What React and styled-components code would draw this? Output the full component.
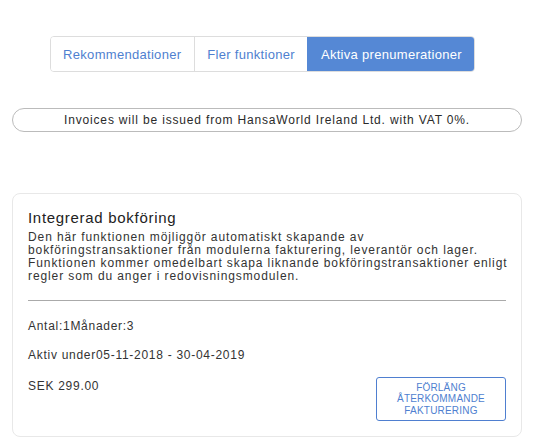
import styled, { createGlobalStyle } from "styled-components";

const GlobalStyle = createGlobalStyle`
  body {
    margin: 0;
    background: #ffffff;
    font-family: "Liberation Sans", Arial, sans-serif;
    color: #333333;
  }
`;

const tabs = ["Rekommendationer", "Fler funktioner", "Aktiva prenumerationer"];

export default function App() {
  return (
    <Page>
      <GlobalStyle />
      <TabRow>
        <TabGroup>
          {tabs.map((t, i) => (
            <Tab key={t} $active={i === 2}>
              {t}
            </Tab>
          ))}
        </TabGroup>
      </TabRow>
      <Notice>Invoices will be issued from HansaWorld Ireland Ltd. with VAT 0%.</Notice>
      <Card>
        <Title>Integrerad bokföring</Title>
        <Description>
          Den här funktionen möjliggör automatiskt skapande av
          <br />
          bokföringstransaktioner från modulerna fakturering, leverantör och lager.
          <br />
          Funktionen kommer omedelbart skapa liknande bokföringstransaktioner enligt
          <br />
          regler som du anger i redovisningsmodulen.
        </Description>
        <Divider />
        <Info>Antal:1Månader:3</Info>
        <Info>Aktiv under05-11-2018 - 30-04-2019</Info>
        <Footer>
          <Info>SEK 299.00</Info>
          <ExtendBtn>
            Förläng
            <br />
            återkommande
            <br />
            fakturering
          </ExtendBtn>
        </Footer>
      </Card>
    </Page>
  );
}

const Page = styled.div`
  padding: 36px 23px 12px 12px;
`;

const TabRow = styled.div`
  display: flex;
  justify-content: center;
  padding-right: 9px;
`;

const TabGroup = styled.div`
  display: flex;
  border: 1px solid #dddddd;
  border-radius: 4px;
  overflow: hidden;
`;

const Tab = styled.button`
  height: 34px;
  padding: 0 12.5px;
  border: none;
  border-left: 1px solid ${(p) => (p.$active ? "#5588d5" : "#dddddd")};
  background: ${(p) => (p.$active ? "#5588d5" : "#ffffff")};
  color: ${(p) => (p.$active ? "#ffffff" : "#4f7fd0")};
  font-family: inherit;
  font-size: 13px;
  letter-spacing: 0.3px;
  cursor: pointer;

  &:first-child {
    border-left: none;
  }
`;

const Notice = styled.div`
  margin-top: 36px;
  height: 22px;
  line-height: 22px;
  border: 1px solid #bbbbbb;
  border-radius: 12px;
  text-align: center;
  font-size: 12px;
  letter-spacing: 0.83px;
  color: #2a2a2a;
`;

const Card = styled.div`
  margin-top: 61px;
  padding: 15px 15px 15px;
  border: 1px solid #e8e8e8;
  border-radius: 8px;
`;

const Title = styled.h2`
  margin: 0;
  font-size: 15px;
  font-weight: 400;
  line-height: 18px;
  letter-spacing: 0.7px;
  color: #222222;
`;

const Description = styled.p`
  margin: 4px 0 0;
  font-size: 12px;
  line-height: 13px;
  letter-spacing: 0.9px;
  white-space: nowrap;
  color: #333333;
`;

const Divider = styled.hr`
  margin: 17px 0 0;
  border: none;
  border-top: 1px solid #aaaaaa;
`;

const Info = styled.div`
  margin-top: 18px;
  font-size: 12px;
  line-height: 14px;
  letter-spacing: 0.72px;
  color: #333333;

  & + & {
    margin-top: 15px;
  }
`;

const Footer = styled.div`
  display: flex;
  justify-content: space-between;
  align-items: flex-start;
  margin-top: 17px;

  ${Info} {
    margin-top: 0;
  }
`;

const ExtendBtn = styled.button`
  width: 130px;
  height: 44px;
  margin-top: -2px;
  padding: 0;
  border: 1px solid #4f7fd0;
  border-radius: 3px;
  background: #ffffff;
  color: #4f7fd0;
  font-family: inherit;
  font-size: 10px;
  line-height: 11.5px;
  letter-spacing: 0.2px;
  text-transform: uppercase;
  cursor: pointer;
`;
